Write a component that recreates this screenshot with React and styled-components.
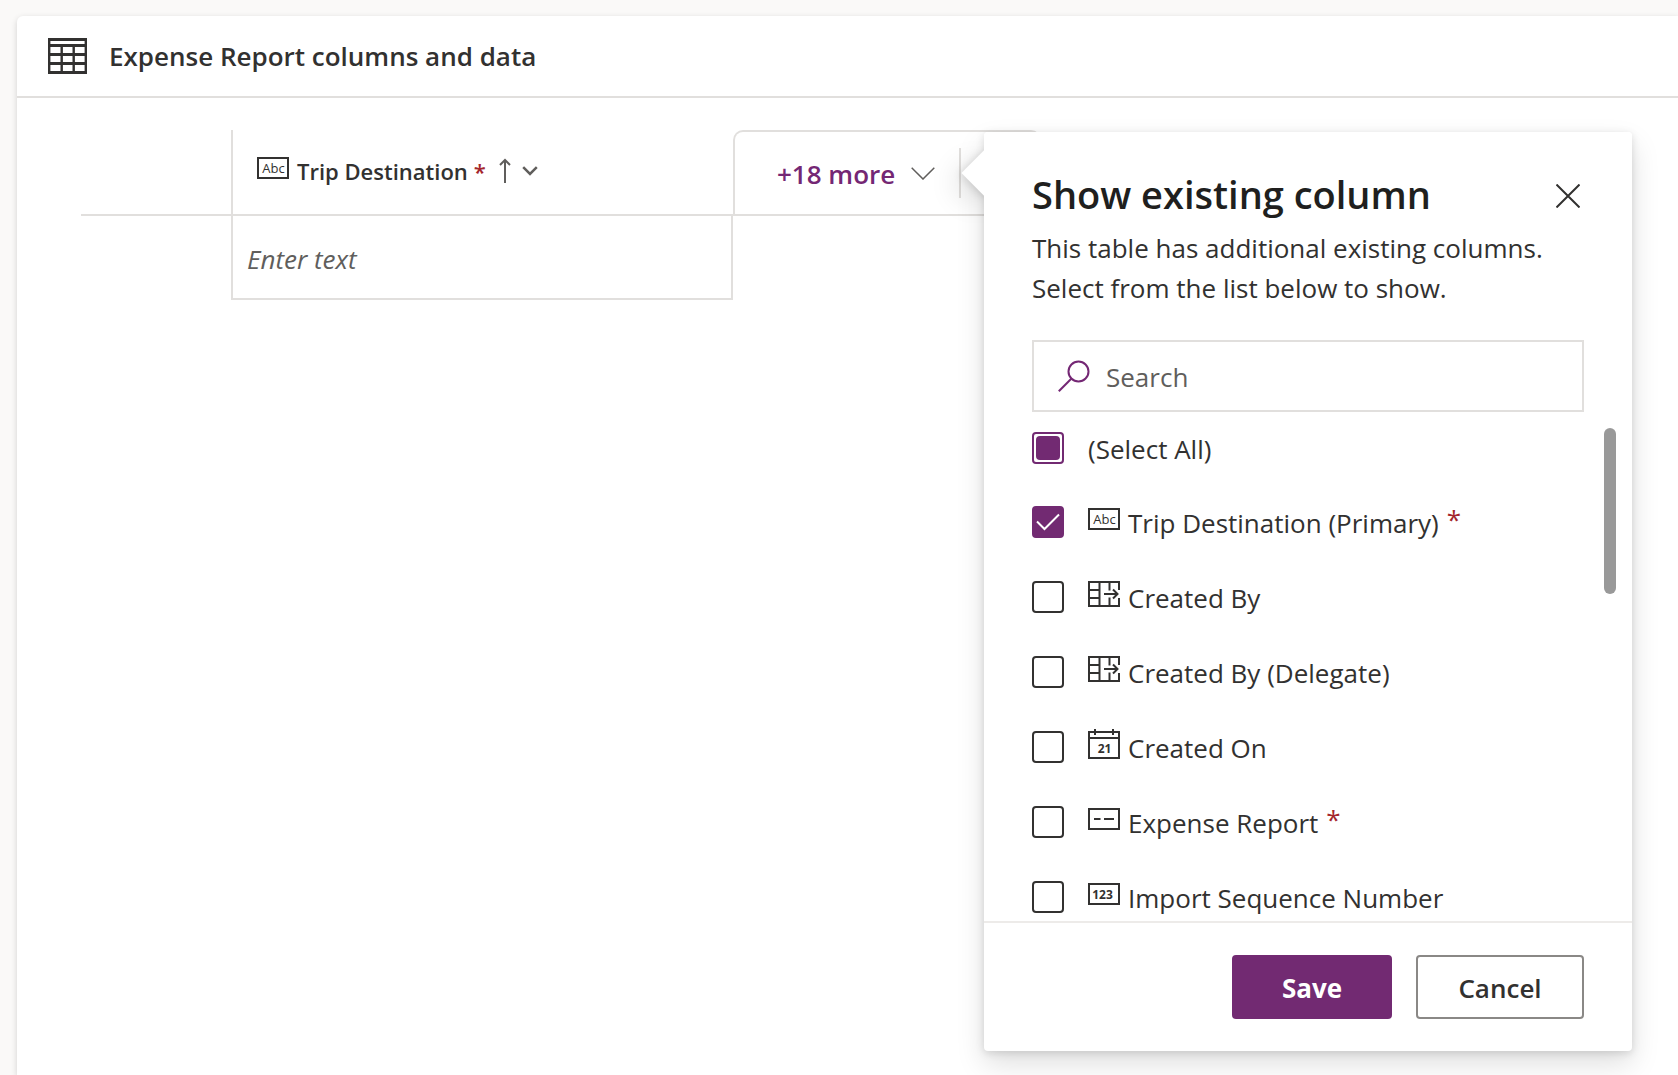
import React, { useEffect, useRef, useState } from "react";
import styled, { createGlobalStyle, css } from "styled-components";

const color = {
  page: "#faf9f8",
  surface: "#ffffff",
  line: "#e1dfdd",
  lineSoft: "#edebe9",
  text: "#323130",
  strong: "#201f1e",
  muted: "#605e5c",
  border: "#8a8886",
  brand: "#742774",
  brandFill: "#722a72",
  required: "#a4262c",
  thumb: "#999999",
};

const GlobalStyle = createGlobalStyle`
  *, *::before, *::after { box-sizing: border-box; }
  body {
    margin: 0;
    background: ${color.page};
    color: ${color.text};
    font-family: "Open Sans", "Noto Sans", sans-serif;
    font-size: 26px;
    overflow: hidden;
  }
  button, input { font: inherit; color: inherit; }
`;

const Page = styled.div`
  min-height: 100vh;
  padding: 16px 0 0 17px;
  display: flex;
`;

const Card = styled.main`
  flex: 1;
  min-width: 0;
  background: ${color.surface};
  border-top-left-radius: 6px;
  box-shadow: 0 2px 6px rgba(0, 0, 0, 0.16);
`;

const CardHeader = styled.header`
  display: flex;
  align-items: center;
  gap: 22px;
  height: 82px;
  padding: 0 32px 0 31px;
  border-bottom: 2px solid ${color.line};
`;

const CardTitle = styled.h1`
  margin: 0;
  font-size: 26px;
  font-weight: 600;
  line-height: 40px;
`;

const GridArea = styled.div`
  padding: 32px 0 0 64px;
`;

const DataTable = styled.table`
  border-collapse: separate;
  border-spacing: 0;
  table-layout: fixed;
  width: 960px;
`;

const RowHead = styled.td`
  width: 150px;
  padding: 0;
  border-bottom: ${(p) => (p.$ruled ? `2px solid ${color.line}` : "0")};
`;

const ColumnHead = styled.th`
  width: 502px;
  height: 86px;
  padding: 0 24px 2px;
  border-left: 2px solid ${color.line};
  border-bottom: 2px solid ${color.line};
  font-weight: 600;
  font-size: 22px;
  text-align: left;
`;

const ColumnLabel = styled.div`
  display: flex;
  align-items: center;
  height: 36px;
`;

const ColumnName = styled.span`
  padding-left: 8px;
  line-height: 32px;
`;

const Required = styled.span`
  color: ${color.required};
  padding-left: ${(p) => (p.$raised ? "8px" : "6px")};
  vertical-align: ${(p) => (p.$raised ? "4px" : "baseline")};
  line-height: 1;
`;

const HeadButton = styled.button`
  display: flex;
  padding: 0;
  border: 0;
  background: none;
  margin-left: ${(p) => (p.$spaced ? "12px" : "10px")};
`;

const MoreHead = styled.th`
  padding: 0;
  border-bottom: 2px solid ${color.line};
  font-weight: 600;
`;

const MoreTab = styled.div`
  position: relative;
  display: flex;
  align-items: center;
  height: 84px;
  border: 2px solid ${color.line};
  border-bottom: 0;
  border-radius: 10px 10px 0 0;
`;

const MoreButton = styled.button`
  display: flex;
  align-items: center;
  gap: 16px;
  height: 50px;
  width: 226px;
  padding: 0 0 0 42px;
  border: 0;
  border-right: 2px solid ${color.line};
  background: none;
  color: ${color.brand};
  font-weight: 600;
  line-height: 40px;
  white-space: nowrap;
`;

const MoreText = styled.span`
  padding-top: 2px;
`;

const InputCell = styled.td`
  height: 84px;
  padding: 0;
  border: 2px solid ${color.line};
  border-top: 0;
`;

const CellInput = styled.input`
  display: block;
  width: 100%;
  height: 80px;
  padding: 4px 14px 0;
  border: 0;
  outline: 0;
  background: none;
  font-style: italic;
  &::placeholder { color: ${color.muted}; opacity: 1; }
`;

const Callout = styled.section`
  position: absolute;
  z-index: 1;
  top: 0;
  left: 249px;
  width: 648px;
  background: ${color.surface};
  border-radius: 4px;
  box-shadow: 0 13px 29px rgba(0, 0, 0, 0.13), 0 2px 8px rgba(0, 0, 0, 0.13);
  font-weight: 400;
  text-align: left;

  &::before {
    content: "";
    position: absolute;
    z-index: -1;
    top: 25px;
    left: -16px;
    width: 32px;
    height: 32px;
    background: ${color.surface};
    transform: rotate(45deg);
    box-shadow: 0 13px 29px rgba(0, 0, 0, 0.13), 0 2px 8px rgba(0, 0, 0, 0.13);
  }
`;

const CalloutBody = styled.div`
  padding: 36px 0 0 48px;
  background: ${color.surface};
  border-radius: 4px 4px 0 0;
`;

const CalloutTop = styled.div`
  display: flex;
  align-items: center;
  justify-content: space-between;
  padding-right: 48px;
`;

const CalloutTitle = styled.h2`
  margin: 0;
  padding-bottom: 4px;
  font-size: 38px;
  font-weight: 600;
  line-height: 52px;
  color: ${color.strong};
`;

const CloseButton = styled.button`
  display: flex;
  padding: 4px;
  border: 0;
  background: none;
`;

const CalloutText = styled.p`
  margin: 4px 48px 0 0;
  line-height: 40px;
`;

const SearchBox = styled.label`
  display: flex;
  align-items: center;
  gap: 16px;
  height: 72px;
  margin: 32px 48px 0 0;
  padding: 0 24px;
  border: 2px solid ${color.line};
`;

const SearchInput = styled.input`
  flex: 1;
  min-width: 0;
  padding: 2px 0 0;
  border: 0;
  outline: 0;
  background: none;
  &::placeholder { color: ${color.muted}; opacity: 1; }
`;

const ListArea = styled.div`
  display: flex;
  justify-content: space-between;
  gap: 16px;
  height: 509px;
  padding-right: 16px;
  overflow: hidden;
`;

const OptionList = styled.ul`
  flex: 1;
  margin: 0;
  padding: 0;
  list-style: none;
  overflow: hidden;
`;

const Option = styled.li`
  height: 75px;
  padding-top: 20px;
  &:first-child { height: 74px; }
`;

const OptionLabel = styled.label`
  display: flex;
  align-items: center;
  height: 32px;
`;

const OptionText = styled.span`
  padding-left: ${(p) => (p.$plain ? "0" : "8px")};
  padding-top: 2px;
  line-height: 40px;
  white-space: nowrap;
`;

const CheckSlot = styled.span`
  display: grid;
  place-items: center;
  width: 32px;
  height: 32px;
  margin-right: 24px;
  flex: none;
  > * { grid-area: 1 / 1; }
  > svg { pointer-events: none; z-index: 1; }
`;

const CheckInput = styled.input`
  appearance: none;
  width: 32px;
  height: 32px;
  margin: 0;
  border: 2px solid ${color.text};
  border-radius: 4px;
  background: ${color.surface};

  &:checked {
    border-color: ${color.brandFill};
    background: ${color.brandFill};
  }

  ${(p) =>
    p.$mixed &&
    css`
      padding: 2px;
      border-color: ${color.brandFill};
      &::before {
        content: "";
        display: block;
        height: 24px;
        border-radius: 4px;
        background: ${color.brandFill};
      }
    `}
`;

const ScrollThumb = styled.div`
  width: 12px;
  height: 166px;
  margin-top: 16px;
  border-radius: 6px;
  background: ${color.thumb};
`;

const CalloutFooter = styled.footer`
  display: flex;
  justify-content: flex-end;
  gap: 24px;
  padding: 32px 48px;
  border-top: 2px solid ${color.lineSoft};
  border-radius: 0 0 4px 4px;
`;

const ActionButton = styled.button`
  height: 64px;
  padding: 2px 0 0;
  width: ${(p) => (p.$primary ? "160px" : "168px")};
  border: 2px solid ${(p) => (p.$primary ? color.brandFill : color.border)};
  border-radius: 4px;
  background: ${(p) => (p.$primary ? color.brandFill : color.surface)};
  color: ${(p) => (p.$primary ? "#ffffff" : color.text)};
  font-weight: ${(p) => (p.$primary ? 700 : 600)};
`;

const Glyph = styled.svg`
  display: block;
  flex: none;
  fill: none;
  stroke: ${(p) => p.$tone || color.text};
  stroke-width: 2;
`;

const GlyphText = styled.text`
  stroke: none;
  fill: ${color.text};
  font-family: "Open Sans", "Noto Sans", sans-serif;
  font-size: ${(p) => (p.$digits ? "12px" : "13px")};
  font-weight: ${(p) => (p.$digits ? 700 : 500)};
  text-anchor: middle;
`;

const TableGlyph = () => (
  <Glyph width="39" height="36" viewBox="0 0 39 36" aria-hidden="true">
    <path d="M0 1.5h39M0 7.5h39M0 16.5h39M0 25.5h39M0 34.5h39" strokeWidth="3" />
    <path d="M1.2 0v36M13.7 7v29M25.7 7v29M37.8 0v36" strokeWidth="2.4" />
  </Glyph>
);

const typeShapes = {
  text: (
    <>
      <rect x="1" y="3" width="30" height="20" />
      <GlyphText x="16.5" y="18">Abc</GlyphText>
    </>
  ),
  lookup: (
    <>
      <path d="M31 9V1H1v24h30v-8M11.5 1v24M1 9h10M1 17h10M21.5 1v8.500M21.5 16.500v8.500" />
      <path d="M16 13h13.5M25 8.5l4.5 4.5-4.5 4.5" />
    </>
  ),
  date: (
    <>
      <rect x="1" y="1" width="30" height="26" />
      <path d="M1 7h30M7 -2v6M25 -2v6" />
      <GlyphText $digits x="16.5" y="22">21</GlyphText>
    </>
  ),
  id: (
    <>
      <rect x="1" y="3" width="30" height="20" />
      <path d="M6 13h6.500M16 13h10" />
    </>
  ),
  number: (
    <>
      <rect x="1" y="3" width="30" height="20" />
      <GlyphText $digits x="14.5" y="18">123</GlyphText>
    </>
  ),
};

const TypeGlyph = ({ kind }) => (
  <Glyph width="32" height="36" viewBox="0 -2 32 36" aria-hidden="true">
    {typeShapes[kind]}
  </Glyph>
);

const options = [
  { label: "Trip Destination (Primary)", kind: "text", required: true },
  { label: "Created By", kind: "lookup" },
  { label: "Created By (Delegate)", kind: "lookup" },
  { label: "Created On", kind: "date" },
  { label: "Expense Report", kind: "id", required: true },
  { label: "Import Sequence Number", kind: "number" },
];

function SelectAll({ mixed, checked, onChange }) {
  const ref = useRef(null);
  useEffect(() => {
    ref.current.indeterminate = mixed;
  }, [mixed]);
  return (
    <CheckSlot>
      <CheckInput ref={ref} type="checkbox" $mixed={mixed} checked={checked} onChange={onChange} />
    </CheckSlot>
  );
}

function ColumnCallout() {
  const [picked, setPicked] = useState(["Trip Destination (Primary)"]);
  const all = picked.length === options.length;
  const toggle = (label) =>
    setPicked((now) => (now.includes(label) ? now.filter((l) => l !== label) : [...now, label]));

  return (
    <Callout role="dialog" aria-labelledby="callout-title">
      <CalloutBody>
        <CalloutTop>
          <CalloutTitle id="callout-title">Show existing column</CalloutTitle>
          <CloseButton type="button" aria-label="Close">
            <Glyph width="24" height="24" viewBox="0 0 24 24">
              <path d="M0.500 0.500l23 23M23.500 0.500l-23 23" />
            </Glyph>
          </CloseButton>
        </CalloutTop>
        <CalloutText>
          This table has additional existing columns. Select from the list below to show.
        </CalloutText>
        <SearchBox>
          <Glyph width="32" height="32" viewBox="0 0 32 32" $tone={color.brand} aria-hidden="true">
            <circle cx="20.500" cy="11.500" r="10" />
            <path d="M13.500 18.500L0.800 31.200" />
          </Glyph>
          <SearchInput type="text" placeholder="Search" aria-label="Search" />
        </SearchBox>
        <ListArea>
          <OptionList>
            <Option>
              <OptionLabel>
                <SelectAll
                  mixed={picked.length > 0 && !all}
                  checked={all}
                  onChange={() => setPicked(all ? [] : options.map((o) => o.label))}
                />
                <OptionText $plain>(Select All)</OptionText>
              </OptionLabel>
            </Option>
            {options.map((o) => (
              <Option key={o.label}>
                <OptionLabel>
                  <CheckSlot>
                    <CheckInput
                      type="checkbox"
                      checked={picked.includes(o.label)}
                      onChange={() => toggle(o.label)}
                    />
                    {picked.includes(o.label) && (
                      <Glyph width="32" height="32" viewBox="0 0 32 32" $tone="#ffffff">
                        <path d="M5 15.500l7.500 7.500L27 8.500" />
                      </Glyph>
                    )}
                  </CheckSlot>
                  <TypeGlyph kind={o.kind} />
                  <OptionText>
                    {o.label}
                    {o.required && <Required $raised>*</Required>}
                  </OptionText>
                </OptionLabel>
              </Option>
            ))}
          </OptionList>
          <ScrollThumb />
        </ListArea>
      </CalloutBody>
      <CalloutFooter>
        <ActionButton type="button" $primary>Save</ActionButton>
        <ActionButton type="button">Cancel</ActionButton>
      </CalloutFooter>
    </Callout>
  );
}

export default function App() {
  return (
    <>
      <GlobalStyle />
      <Page>
        <Card>
          <CardHeader>
            <TableGlyph />
            <CardTitle>Expense Report columns and data</CardTitle>
          </CardHeader>
          <GridArea>
            <DataTable>
              <thead>
                <tr>
                  <RowHead $ruled />
                  <ColumnHead scope="col">
                    <ColumnLabel>
                      <TypeGlyph kind="text" />
                      <ColumnName>Trip Destination</ColumnName>
                      <Required>*</Required>
                      <HeadButton type="button" aria-label="Sorted ascending" $spaced>
                        <Glyph width="14" height="26" viewBox="0 0 14 26" $tone={color.muted}>
                          <path d="M7 25V2M2 7l5-5 5 5" />
                        </Glyph>
                      </HeadButton>
                      <HeadButton type="button" aria-label="Column options">
                        <Glyph width="16" height="10" viewBox="0 0 16 10" $tone={color.muted}>
                          <path d="M1.200 1.200L8 8l6.800-6.800" strokeWidth="2.5" />
                        </Glyph>
                      </HeadButton>
                    </ColumnLabel>
                  </ColumnHead>
                  <MoreHead scope="col">
                    <MoreTab>
                      <MoreButton type="button" aria-expanded="true">
                        <MoreText>+18 more</MoreText>
                        <Glyph width="24" height="13" viewBox="0 0 24 13" $tone={color.muted}>
                          <path d="M0.700 0.700L12 12 23.300 0.700" strokeWidth="1.500" />
                        </Glyph>
                      </MoreButton>
                      <ColumnCallout />
                    </MoreTab>
                  </MoreHead>
                </tr>
              </thead>
              <tbody>
                <tr>
                  <RowHead />
                  <InputCell>
                    <CellInput type="text" placeholder="Enter text" aria-label="Trip Destination" />
                  </InputCell>
                  <td />
                </tr>
              </tbody>
            </DataTable>
          </GridArea>
        </Card>
      </Page>
    </>
  );
}
